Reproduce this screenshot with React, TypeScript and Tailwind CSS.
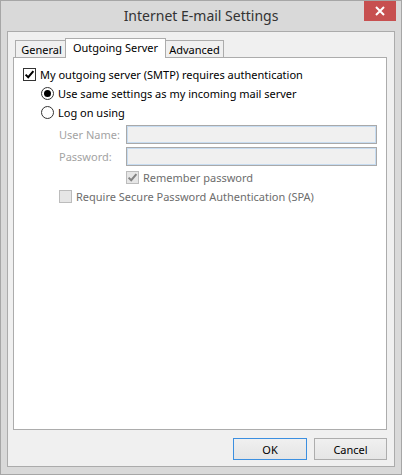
import type { ReactNode } from 'react';

const font = { fontFamily: '"Noto Sans", "Open Sans", Arial, sans-serif' };

function Check({ checked, disabled }: { checked?: boolean; disabled?: boolean }) {
  return (
    <span
      className={
        'flex h-[13px] w-[13px] shrink-0 items-center justify-center border ' +
        (disabled ? 'border-[#bcbcbc] bg-[#e6e6e6]' : 'border-[#333333] bg-white')
      }
    >
      {checked && (
        <svg width="11" height="11" viewBox="0 0 11 11">
          <path d="M1.6 5.6 L4.2 8.2 L9.4 2.2" fill="none" stroke={disabled ? '#838383' : '#000'} strokeWidth="2" />
        </svg>
      )}
    </span>
  );
}

function Radio({ checked }: { checked?: boolean }) {
  return (
    <span className="flex h-[13px] w-[13px] shrink-0 items-center justify-center rounded-full border border-[#333333] bg-white">
      {checked && <span className="h-[7px] w-[7px] rounded-full bg-black" />}
    </span>
  );
}

function Row({ children, className = '' }: { children: ReactNode; className?: string }) {
  return <div className={'flex h-[19px] items-center gap-[4px] ' + className}>{children}</div>;
}

function Field({ label, className = '' }: { label: string; className?: string }) {
  return (
    <div className={'flex h-[19px] items-center ' + className}>
      <span className="box-content w-[67px] pl-[36px] text-[#a3a3a3]">{label}</span>
      <div className="h-[19px] w-[251px] border border-[#a9a9a9] bg-[#f0f0f0] shadow-[inset_0_0_0_1px_#c7dcf1]" />
    </div>
  );
}

export default function App() {
  return (
    <div className="flex h-[475px] w-[402px] flex-col border border-[#a6a6a6] bg-[#d9d9d9] text-[11px] leading-none text-black" style={font}>
      {/* title bar */}
      <div className="grid h-[30px] grid-cols-[1fr_auto_1fr] items-start">
        <div />
        <div className="pt-[6px] text-[14px] leading-[18px] text-[#333333]">Internet E-mail Settings</div>
        <div className="flex justify-end pr-[5px]">
          <div className="flex h-[20px] w-[32px] items-center justify-center bg-[#c75050]">
            <svg width="10" height="10" viewBox="0 0 10 10">
              <path d="M1 1 L9 9 M9 1 L1 9" stroke="#fff" strokeWidth="2" />
            </svg>
          </div>
        </div>
      </div>

      {/* client area */}
      <div className="mx-[6px] flex flex-1 flex-col border border-[#ababab] bg-[#f0f0f0] pt-[6px]">
        <div className="ml-[7px] flex h-[19px] items-end">
          <div className="flex h-[17px] w-[50px] items-center justify-center border-l border-t border-[#acacac] pl-[2px]">General</div>
          <div className="relative z-10 -mb-px flex h-[20px] w-[101px] items-center justify-center border-x border-t border-[#acacac] bg-white pb-[3px]">
            Outgoing Server
          </div>
          <div className="flex h-[17px] w-[58px] items-center justify-center border-r border-t border-[#acacac]">Advanced</div>
        </div>

        <div className="ml-[5px] mr-[7px] h-[373px] border border-[#acacac] bg-white pl-[9px] pt-[7px]">
          <Row>
            <Check checked />
            <span>My outgoing server (SMTP) requires authentication</span>
          </Row>
          <Row className="pl-[18px]">
            <Radio checked />
            <span>Use same settings as my incoming mail server</span>
          </Row>
          <Row className="pl-[18px]">
            <Radio />
            <span>Log on using</span>
          </Row>
          <Field label="User Name:" className="mt-[3px]" />
          <Field label="Password:" className="mt-[3px]" />
          <div className="mt-px flex h-[20px] items-center gap-[4px] pl-[103px]">
            <Check checked disabled />
            <span className="text-[#6d6d6d]">Remember password</span>
          </div>
          <Row className="pl-[36px]">
            <Check disabled />
            <span className="text-[#6d6d6d]">Require Secure Password Authentication (SPA)</span>
          </Row>
        </div>

        <div className="mr-[7px] mt-[8px] flex justify-end gap-[7px]">
          <button className="h-[22px] w-[74px] border border-[#3c8fe0] bg-gradient-to-b from-[#f0f0f0] to-[#e5e5e5]">OK</button>
          <button className="h-[22px] w-[73px] border border-[#adadad] bg-gradient-to-b from-[#f0f0f0] to-[#e5e5e5]">Cancel</button>
        </div>
      </div>
      <div className="h-[7px]" />
    </div>
  );
}
